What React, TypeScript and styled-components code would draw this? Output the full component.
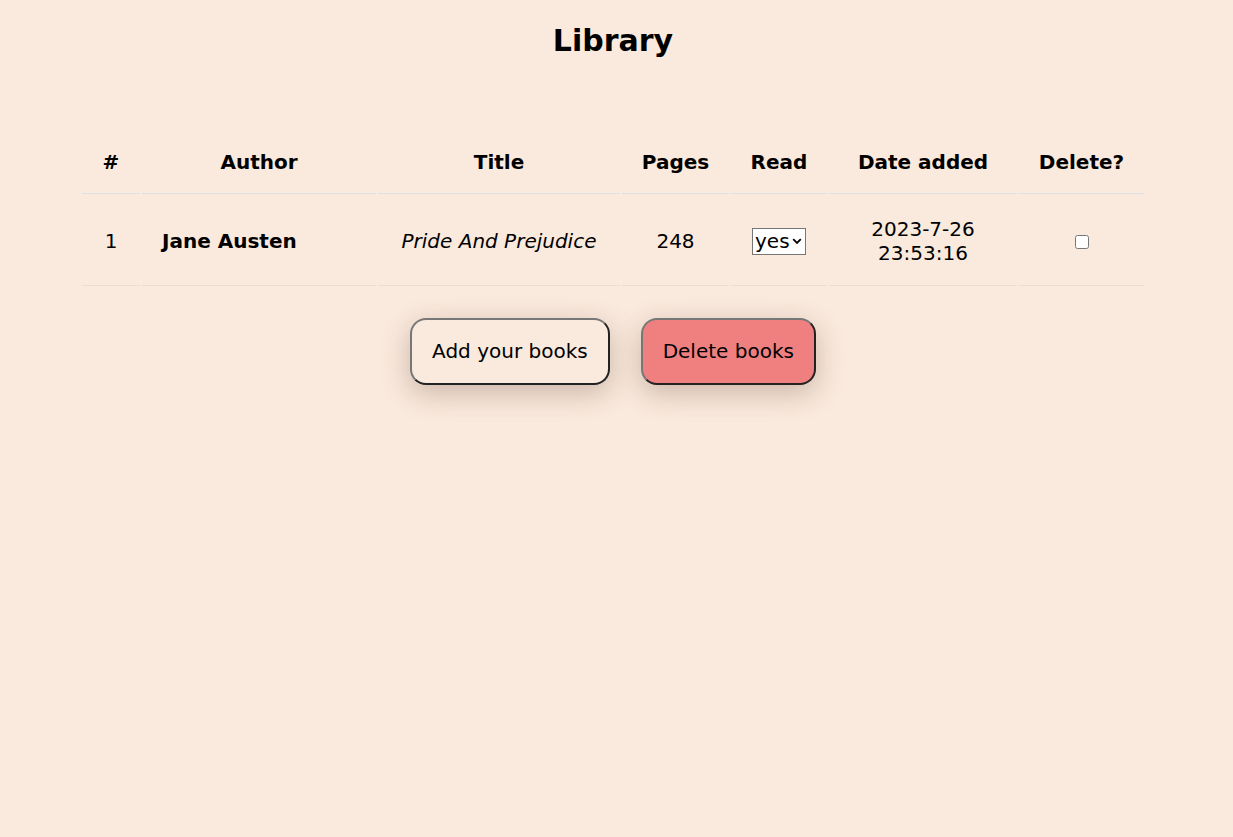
import { createGlobalStyle, styled } from "styled-components";

const GlobalStyle = createGlobalStyle`
  html, body {
    margin: 0;
    background-color: #fae9dd;
  }

  body {
    font-family: "DejaVu Sans", Verdana, sans-serif;
    color: #000;
    min-height: 100vh;
  }
`;

const Page = styled.main`
  display: flex;
  flex-direction: column;
  align-items: center;
  padding: 23px 7px 0 0;
`;

const Heading = styled.h1`
  margin: 0 0 69px;
  font-size: 30px;
  line-height: 36px;
  font-weight: bold;
`;

const Table = styled.table`
  width: 1066px;
  table-layout: fixed;
  border-collapse: separate;
  border-spacing: 2px;
  font-size: 20px;
  line-height: 24.3px;
`;

const HeadCell = styled.th<{ $w: number }>`
  width: ${(p) => p.$w}px;
  padding: 20px 0 19px;
  text-align: center;
  font-weight: bold;
  border-bottom: 1px solid #dcdfe3;
`;

const Cell = styled.td<{ $align?: string; $bold?: boolean; $italic?: boolean }>`
  padding: 20.5px ${(p) => (p.$align === "left" ? "20px" : "0")} 19.5px;
  text-align: ${(p) => p.$align || "center"};
  font-weight: ${(p) => (p.$bold ? "bold" : "normal")};
  font-style: ${(p) => (p.$italic ? "italic" : "normal")};
  border-bottom: 1px solid #eddcd0;
  vertical-align: middle;
`;

const SelectBox = styled.span`
  display: inline-flex;
  align-items: center;
  gap: 2px;
  height: 25px;
  padding: 0 3px 0 2px;
  background: #fff;
  border: 1px solid #767676;
  vertical-align: middle;

  svg {
    pointer-events: none;
  }
`;

const Select = styled.select`
  appearance: none;
  border: none;
  outline: none;
  padding: 0;
  margin: 0;
  background: transparent;
  font-family: inherit;
  font-size: 20px;
  color: #000;
  line-height: 24px;
`;

const Checkbox = styled.input`
  width: 14px;
  height: 14px;
  margin: 0;
  vertical-align: middle;
`;

const Actions = styled.div`
  display: flex;
  gap: 31px;
  margin-top: 30px;
`;

const Button = styled.button<{ $danger?: boolean }>`
  font-family: "DejaVu Sans", Verdana, sans-serif;
  font-size: 20px;
  line-height: 22px;
  color: #000;
  padding: 20.5px 20px;
  border: 2px solid;
  border-color: #777 #222 #222 #777;
  border-radius: 16px;
  background-color: ${(p) => (p.$danger ? "#f08080" : "#fae9dd")};
  box-shadow: 0 8px 28px rgba(80, 50, 30, 0.28);
  cursor: pointer;
`;

const columns: [string, number][] = [
  ["#", 58],
  ["Author", 234],
  ["Title", 242],
  ["Pages", 107],
  ["Read", 96],
  ["Date added", 188],
  ["Delete?", 125],
];

export default function App() {
  return (
    <>
      <GlobalStyle />
      <Page>
        <Heading>Library</Heading>
        <Table>
          <thead>
            <tr>
              {columns.map(([name, w]) => (
                <HeadCell key={name} $w={w}>
                  {name}
                </HeadCell>
              ))}
            </tr>
          </thead>
          <tbody>
            <tr>
              <Cell>1</Cell>
              <Cell $align="left" $bold>
                Jane Austen
              </Cell>
              <Cell $italic>Pride And Prejudice</Cell>
              <Cell>248</Cell>
              <Cell>
                <SelectBox>
                  <Select defaultValue="yes">
                    <option value="yes">yes</option>
                    <option value="no">no</option>
                  </Select>
                  <svg width="10" height="7" viewBox="0 0 10 7">
                    <path d="M1.2 1.2l3.8 3.8 3.8-3.8" fill="none" stroke="#000" strokeWidth="1.8" />
                  </svg>
                </SelectBox>
              </Cell>
              <Cell>
                2023-7-26
                <br />
                23:53:16
              </Cell>
              <Cell>
                <Checkbox type="checkbox" />
              </Cell>
            </tr>
          </tbody>
        </Table>
        <Actions>
          <Button>Add your books</Button>
          <Button $danger>Delete books</Button>
        </Actions>
      </Page>
    </>
  );
}
